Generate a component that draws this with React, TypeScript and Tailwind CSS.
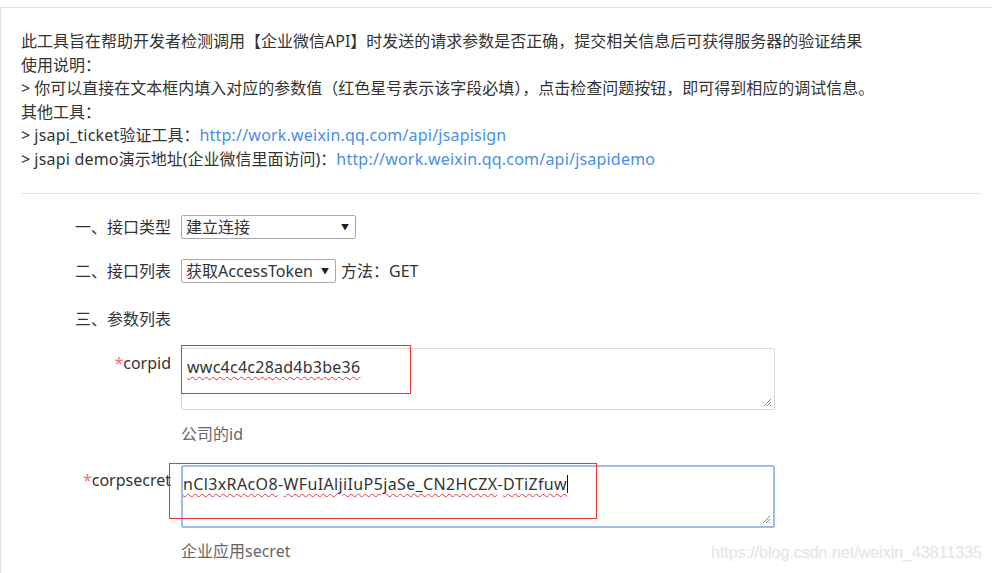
import React from 'react';

const font = "[font-family:'Noto_Sans','Noto_Sans_CJK_SC',sans-serif]";

const Grip: React.FC = () => (
  <svg className="absolute right-[2px] bottom-[2px]" width="9" height="9" viewBox="0 0 9 9">
    <path d="M8 1 L1 8 M8 4 L4 8 M8 7 L7 8" stroke="#8a8a8a" strokeWidth="1" fill="none" />
  </svg>
);

const Squiggle: React.FC<{ children: React.ReactNode }> = ({ children }) => (
  <span className="underline decoration-wavy decoration-[#e53935] decoration-1 underline-offset-[3px]">{children}</span>
);

const FakeSelect: React.FC<{ value: string; width: string }> = ({ value, width }) => (
  <div className={`${width} h-6 border border-[#a9a9a9] rounded-[2px] bg-white flex items-center justify-between pl-[4px] pr-[6px] leading-[22px]`}>
    <span>{value}</span>
    <span className="text-[8px] text-[#222] leading-none">▼</span>
  </div>
);

export default function App() {
  return (
    <div className={`${font} relative min-h-screen bg-white pt-[7px] text-[16px] text-[#333]`}>
      <div className="border-t border-l border-[#e2e2e2] pl-5 pr-[11px] pt-[22px] pb-6">
        <div className="leading-[23.6px]">
          <div>此工具旨在帮助开发者检测调用【企业微信API】时发送的请求参数是否正确，提交相关信息后可获得服务器的验证结果</div>
          <div>使用说明：</div>
          <div>&gt; 你可以直接在文本框内填入对应的参数值（红色星号表示该字段必填），点击检查问题按钮，即可得到相应的调试信息。</div>
          <div>其他工具：</div>
          <div>
            &gt; <span className="tracking-[0.2px]">jsapi_ticket</span>验证工具：
            <a className="text-[#4a8ee6] tracking-[0.2px]">http://work.weixin.qq.com/api/jsapisign</a>
          </div>
          <div>
            &gt; <span className="tracking-[0.2px]">jsapi demo</span>演示地址(企业微信里面访问)：
            <a className="text-[#4a8ee6] tracking-[0.2px]">http://work.weixin.qq.com/api/jsapidemo</a>
          </div>
        </div>

        <div className="mt-[21px] border-t border-[#e2e2e2]" />

        <div className="mt-[21px] flex items-center h-6">
          <div className="w-[150px] text-right leading-6">一、接口类型</div>
          <div className="ml-[10px]">
            <FakeSelect value="建立连接" width="w-[175px]" />
          </div>
        </div>

        <div className="mt-5 flex items-center h-6">
          <div className="w-[150px] text-right leading-6">二、接口列表</div>
          <div className="ml-[10px] flex items-center gap-[5px]">
            <FakeSelect value="获取AccessToken" width="w-[155px]" />
            <span>方法：GET</span>
          </div>
        </div>

        <div className="mt-6 flex items-center h-6">
          <div className="w-[150px] text-right leading-6">三、参数列表</div>
        </div>

        <div className="mt-[17px] flex">
          <div className="w-[150px] text-right leading-6 pt-[3px]">
            <span className="text-[#f47272]">*</span>corpid
          </div>
          <div className="ml-[10px] flex flex-col">
            <div className="relative w-[594px] h-[62px] border border-[#d9d9d9] rounded-[2px] bg-white pl-[5px] pt-[6px] leading-6 tracking-[0.25px]">
              <Squiggle>wwc4c4c28ad4b3be36</Squiggle>
              <Grip />
              <div className="absolute left-[-1px] top-[-4px] w-[230px] h-[49px] border border-[#ee3333]" />
            </div>
            <div className="mt-3 leading-6 text-[#666]">公司的id</div>
          </div>
        </div>

        <div className="mt-[19px] flex">
          <div className="w-[150px] text-right leading-6 pt-[3px]">
            <span className="text-[#f47272]">*</span>corpsecret
          </div>
          <div className="ml-[10px] flex flex-col">
            <div className="relative w-[594px] h-[63px] border-2 border-[#9dbdf0] rounded-[2px] bg-white pl-0 pt-[5px] leading-6 tracking-[0.37px]">
              <Squiggle>nCl3xRAcO8</Squiggle>-<Squiggle>WFuIAljiIuP5jaSe_CN2HCZX</Squiggle>-<Squiggle>DTiZfuw</Squiggle>
              <span className="inline-block w-px h-[18px] bg-[#111] align-[-3px]" />
              <Grip />
              <div className="absolute left-[-14px] top-[-4px] w-[428px] h-[56px] border border-[#ee3333]" />
            </div>
            <div className="mt-[11px] leading-6 text-[#666]">企业应用secret</div>
          </div>
        </div>
      </div>

      <div className="absolute left-[711px] top-[542px] text-[16px] leading-[22px] text-[#e6e6e6] [font-family:'Liberation_Sans',Arial,sans-serif] [text-shadow:0_0_1px_#f2f2f2]">
        https://blog.csdn.net/weixin_43811335
      </div>
    </div>
  );
}
